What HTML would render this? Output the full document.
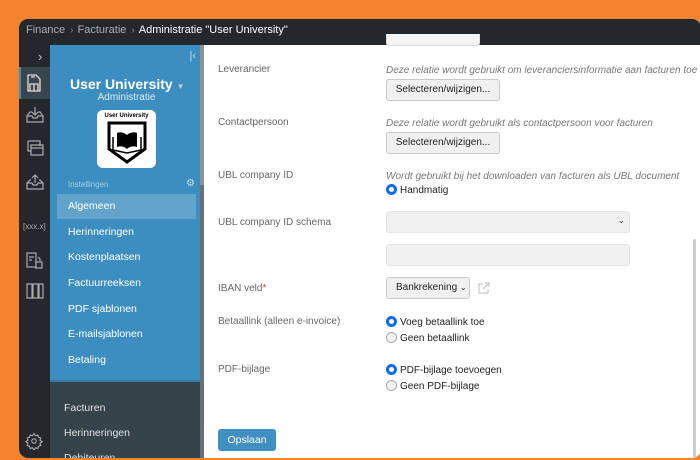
<!DOCTYPE html>
<html><head><meta charset="utf-8"><style>
*{box-sizing:border-box;margin:0;padding:0}
body{width:700px;height:460px;background:#f5832c;font-family:"Liberation Sans",sans-serif;position:relative;overflow:hidden}
.win{position:absolute;left:19px;top:19px;width:682px;height:439px;border-radius:9px;overflow:hidden;background:#fff}
.top{position:absolute;left:0;top:0;right:0;height:26px;background:#22282b;color:#a9afb3;font-size:11px;line-height:22px;padding-left:7px;white-space:nowrap}
.top b{font-weight:normal;color:#fff}
.top .s{color:#888;margin:0 4px 0 5px;font-size:10px}
.rail{position:absolute;left:0;top:26px;width:31px;bottom:0;background:#22282b}
.rail .act{position:absolute;left:0;top:22px;width:31px;height:32px;background:#3a464d;border-left:2px solid #3d8dc0}
.rail svg{position:absolute;left:6px}
.blue{position:absolute;left:31px;top:26px;width:150px;height:335px;background:#3d8ec0;color:#fff}
.dark{position:absolute;left:31px;top:361px;width:150px;bottom:0;background:#36434a;border-top:2px solid #3779a3}
.sb{position:absolute;left:181px;top:26px;width:4px;bottom:0;background:#6a7074}
.sb2{position:absolute;left:181px;top:26px;width:4px;height:140px;background:#8e9295}
.item{position:absolute;left:18px;font-size:10.5px;color:#fff}
.ditem{position:absolute;left:14px;font-size:10.5px;color:#dde2e5}
.lbl{position:absolute;left:199px;font-size:10px;color:#666}
.hint{position:absolute;left:367px;font-size:10px;color:#777;font-style:italic;white-space:nowrap}
.btn{position:absolute;left:367px;width:114px;height:22px;border:1px solid #c8c8c8;border-radius:3px;background:#f0f0f0;font-size:10px;color:#222;text-align:center;line-height:20px;white-space:nowrap}
.inp{position:absolute;left:367px;width:244px;height:22px;border-radius:3px;background:#f0f0f0;border:1px solid #e6e6e6}
.radio{position:absolute;left:367px;font-size:10px;color:#222;height:14px;line-height:12px;white-space:nowrap}
.radio i{display:inline-block;width:11px;height:11px;border-radius:50%;border:1px solid #aaa;background:#f4f4f4;vertical-align:-2px;margin-right:3px}
.radio i.on{border:3px solid #0a6cf5;background:#fff}
</style></head><body>
<div class="win">
<div class="top">Finance<span class="s">›</span>Facturatie<span class="s">›</span><b>Administratie "User University"</b></div>
<div class="rail">
<div style="position:absolute;left:19px;top:4px;color:#ccc;font-size:13px">›</div>
<div class="act"></div>
<svg style="top:28px" width="18" height="20" viewBox="0 0 18 20" fill="none" stroke="#ddd" stroke-width="1.3"><path d="M3 2h8l4 4v12H3z M5 11h8v7H5z M9 11v7 M6 4h4"/></svg>
<svg style="top:60px" width="20" height="20" viewBox="0 0 20 20" fill="none" stroke="#aaa" stroke-width="1.2"><path d="M2 11l3-4h2 M18 11l-3-4h-2 M2 11v6h16v-6h-5l-1 2H8l-1-2z M10 2v8 M7 7l3 3 3-3"/></svg>
<svg style="top:93px" width="20" height="20" viewBox="0 0 20 20" fill="none" stroke="#aaa" stroke-width="1.2"><path d="M3 3h12v5 M3 3v10h3 M6 7h12v10H6z M6 10h12"/></svg>
<svg style="top:127px" width="20" height="20" viewBox="0 0 20 20" fill="none" stroke="#aaa" stroke-width="1.2"><path d="M2 11l3-3h1 M18 11l-3-3h-1 M2 11v6h16v-6h-5l-1 2H8l-1-2z M10 11V3 M7 6l3-3 3 3"/></svg>
<div style="position:absolute;left:4px;top:177px;font-size:8px;color:#aaa">[xxx.x]</div>
<svg style="top:206px" width="20" height="20" viewBox="0 0 20 20" fill="none" stroke="#aaa" stroke-width="1.2"><path d="M2 2h9v14H2z M4 6h5 M4 9h3 M10 11h7v6h-7 M13 6l2 2v2"/></svg>
<svg style="top:236px" width="20" height="20" viewBox="0 0 20 20" fill="none" stroke="#aaa" stroke-width="1.2"><path d="M2 3h5v14H2z M8 3h5v14H8z M14 3h4v14h-4z"/></svg>
<svg style="top:387px" width="18" height="18" viewBox="0 0 24 24" fill="none" stroke="#aaa" stroke-width="1.5"><circle cx="12" cy="12" r="3"/><path d="M12 2l2 3 3-1 1 3 3 1-1 3 3 2-3 2 1 3-3 1-1 3-3-1-2 3-2-3-3 1-1-3-3-1 1-3-3-2 3-2-1-3 3-1 1-3 3 1z"/></svg>
</div>
<div class="blue">
<div style="position:absolute;right:4px;top:5px;font-size:11px;color:#cde">|‹</div>
<div style="position:absolute;left:20px;top:31px;font-size:14px;font-weight:bold">User University <span style="font-size:8px;color:#bcd">▼</span></div>
<div style="position:absolute;left:0;width:150px;top:47px;text-align:center;font-size:10px;color:#dbe9f3;padding-left:3px">Administratie</div>
<div style="position:absolute;left:47px;top:65px;width:59px;height:58px;background:#fff;border-radius:6px">
<div style="position:absolute;top:3px;width:59px;text-align:center;font-size:6px;font-weight:bold;color:#000">User University</div>
<svg style="position:absolute;left:9px;top:11px" width="42" height="44" viewBox="0 0 42 44"><path d="M3 2h36v26l-18 13L3 28z" fill="none" stroke="#000" stroke-width="3"/><path d="M21 14c-3-3-8-3-10-2v14c3-1 7-1 10 2c3-3 7-3 10-2V12c-2-1-7-1-10 2z" fill="#000"/><path d="M7 16v13l14 3 14-3V16" fill="none" stroke="#000" stroke-width="1.5"/></svg>
</div>
<div style="position:absolute;left:18px;top:135px;font-size:8px;color:#a9cbe2">Instellingen</div>
<div style="position:absolute;right:5px;top:133px;font-size:10px;color:#cde">⚙</div>
<div style="position:absolute;left:7px;top:149px;width:139px;height:25px;background:#62a3cc"></div>
<div class="item" style="top:155px">Algemeen</div>
<div class="item" style="top:181px">Herinneringen</div>
<div class="item" style="top:206px">Kostenplaatsen</div>
<div class="item" style="top:232px">Factuurreeksen</div>
<div class="item" style="top:258px">PDF sjablonen</div>
<div class="item" style="top:283px">E-mailsjablonen</div>
<div class="item" style="top:309px">Betaling</div>
</div>
<div class="dark">
<div class="ditem" style="top:20px">Facturen</div>
<div class="ditem" style="top:45px">Herinneringen</div>
<div class="ditem" style="top:70px">Debiteuren</div>
</div>
<div class="sb"></div><div class="sb2"></div>
<div style="position:absolute;left:367px;top:15px;width:94px;height:12px;border:1px solid #ddd;border-top:none;border-radius:0 0 3px 3px;background:#f4f4f4"></div>
<div class="lbl" style="top:45px">Leverancier</div>
<div class="hint" style="top:46px">Deze relatie wordt gebruikt om leveranciersinformatie aan facturen toe te</div>
<div class="btn" style="top:60px">Selecteren/wijzigen...</div>
<div class="lbl" style="top:98px">Contactpersoon</div>
<div class="hint" style="top:99px">Deze relatie wordt gebruikt als contactpersoon voor facturen</div>
<div class="btn" style="top:113px">Selecteren/wijzigen...</div>
<div class="lbl" style="top:151px">UBL company ID</div>
<div class="hint" style="top:152px">Wordt gebruikt bij het downloaden van facturen als UBL document</div>
<div class="radio" style="top:165px"><i class="on"></i>Handmatig</div>
<div class="lbl" style="top:198px">UBL company ID schema</div>
<div class="inp" style="top:192px"><span style="position:absolute;right:4px;top:3px;font-size:9px;color:#333">⌄</span></div>
<div class="inp" style="top:225px"></div>
<div class="lbl" style="top:264px">IBAN veld<span style="color:#d33">*</span></div>
<div class="btn" style="top:258px;width:84px;text-align:left;padding-left:9px">Bankrekening <span style="font-size:8px">⌄</span></div>
<svg style="position:absolute;left:459px;top:263px" width="12" height="12" viewBox="0 0 12 12" fill="none" stroke="#bbb"><path d="M5 2H1v9h9V7 M7 1h4v4 M11 1L5 7"/></svg>
<div class="lbl" style="top:297px">Betaallink (alleen e-invoice)</div>
<div class="radio" style="top:297px"><i class="on"></i>Voeg betaallink toe</div>
<div class="radio" style="top:313px"><i></i>Geen betaallink</div>
<div class="lbl" style="top:345px">PDF-bijlage</div>
<div class="radio" style="top:345px"><i class="on"></i>PDF-bijlage toevoegen</div>
<div class="radio" style="top:361px"><i></i>Geen PDF-bijlage</div>
<div style="position:absolute;left:199px;top:410px;width:58px;height:22px;background:#3f8fc1;border-radius:3px;color:#fff;font-size:10.5px;text-align:center;line-height:22px">Opslaan</div>
<div style="position:absolute;right:5px;top:220px;width:3px;height:219px;background:#ccc;border-radius:2px"></div>
</div>
</body></html>
